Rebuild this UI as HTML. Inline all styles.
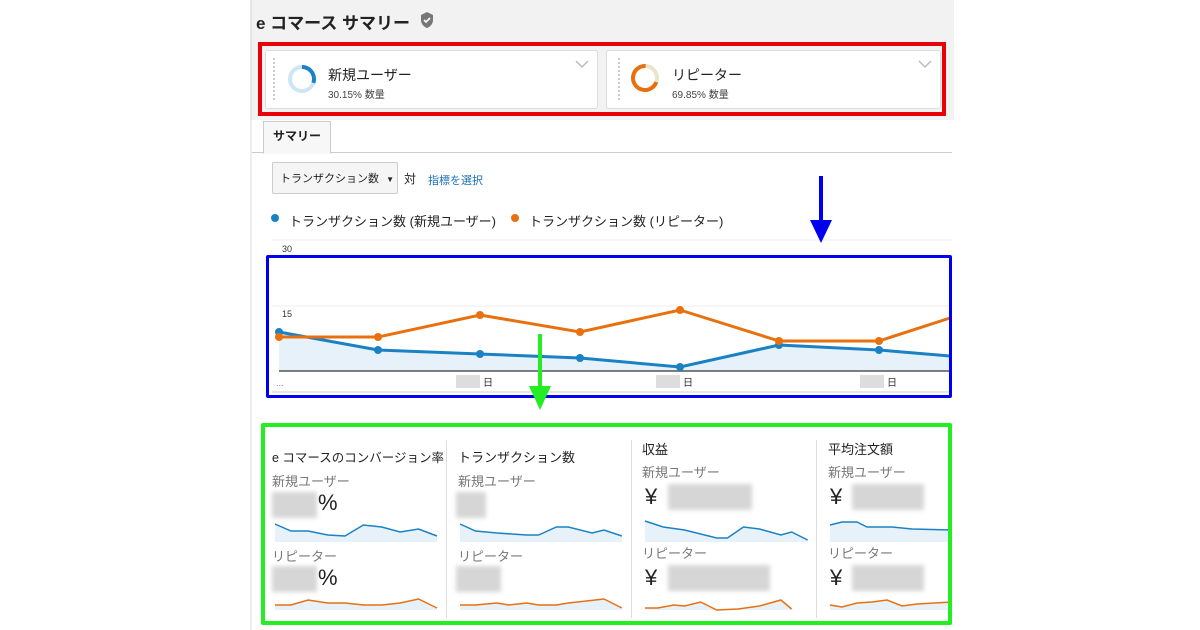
<!DOCTYPE html>
<html><head><meta charset="utf-8"><style>
body{margin:0;width:1200px;height:630px;background:#fff;position:relative;overflow:hidden;font-family:"Liberation Sans","Noto Sans CJK JP",sans-serif;color:#222}
.a{position:absolute}
.card{position:absolute;background:#fff;border:1px solid #ddd;border-radius:3px}
.gr{color:#777}
.blur{position:absolute;background:#d6d6d6;filter:blur(2px)}
</style></head><body>
<div class="a" style="left:250px;top:0;width:702px;height:120px;background:#f2f2f2;border-left:2px solid #e6e6e6"></div>
<div class="a" style="left:250px;top:120px;width:2px;height:510px;background:#eee"></div>
<div class="a" style="left:256px;top:9px;font-size:17px;font-weight:bold">e コマース サマリー</div>
<svg class="a" style="left:420px;top:12px" width="14" height="16" viewBox="0 0 14 16"><path d="M7 0L13 3V8C13 12 10 15 7 16C4 15 1 12 1 8V3Z" fill="#777"/><path d="M4 8l2 2 4-4" stroke="#fff" stroke-width="1.6" fill="none"/></svg>

<div class="card" style="left:265px;top:50px;width:331px;height:57px"></div>
<div class="card" style="left:606px;top:50px;width:333px;height:57px"></div>
<div class="a" style="left:273px;top:58px;width:3px;height:42px;border-left:2px dotted #ccc"></div>
<div class="a" style="left:618px;top:58px;width:3px;height:42px;border-left:2px dotted #ccc"></div>
<svg class="a" style="left:286px;top:63px" width="32" height="32"><circle cx="16" cy="16" r="12" fill="none" stroke="#cde6f5" stroke-width="4"/><circle cx="16" cy="16" r="12" fill="none" stroke="#1a82c4" stroke-width="4" stroke-dasharray="22.7 80" transform="rotate(-90 16 16)"/></svg>
<svg class="a" style="left:628px;top:61px" width="34" height="34"><circle cx="17" cy="17" r="12" fill="none" stroke="#e8e5c8" stroke-width="4"/><circle cx="17" cy="17" r="12" fill="none" stroke="#e8700f" stroke-width="4" stroke-dasharray="52.6 80" transform="rotate(20 17 17)"/></svg>
<div class="a" style="left:328px;top:65px;font-size:14px">新規ユーザー</div>
<div class="a" style="left:328px;top:86px;font-size:10px;color:#444">30.15% 数量</div>
<div class="a" style="left:672px;top:65px;font-size:14px">リピーター</div>
<div class="a" style="left:672px;top:86px;font-size:10px;color:#444">69.85% 数量</div>
<svg class="a" style="left:575px;top:60px" width="14" height="9"><path d="M1 1l6 6 6-6" stroke="#bbb" stroke-width="1.5" fill="none"/></svg>
<svg class="a" style="left:918px;top:60px" width="14" height="9"><path d="M1 1l6 6 6-6" stroke="#bbb" stroke-width="1.5" fill="none"/></svg>
<div class="a" style="left:258px;top:42px;width:680px;height:66px;border:4px solid #e8000b"></div>

<div class="a" style="left:252px;top:152px;width:700px;height:1px;background:#ccc"></div>
<div class="a" style="left:263px;top:121px;width:66px;height:31px;background:#f7f7f7;border:1px solid #ccc;border-bottom:1px solid #f7f7f7;font-size:12px;font-weight:bold;line-height:28px;text-align:center">サマリー</div>
<div class="a" style="left:272px;top:162px;width:126px;height:32px;border:1px solid #ccc;border-radius:2px;background:#f5f5f5;font-size:11px;line-height:32px;padding-left:7px;box-sizing:border-box">トランザクション数 <span style="font-size:8px;margin-left:4px">▼</span></div>
<div class="a" style="left:404px;top:170px;font-size:12px">対</div>
<div class="a" style="left:428px;top:172px;font-size:11px;color:#1a6fb5">指標を選択</div>
<div class="a" style="left:271px;top:214px;width:8px;height:8px;border-radius:50%;background:#1a82c4"></div>
<div class="a" style="left:289px;top:211px;font-size:13px">トランザクション数 (新規ユーザー)</div>
<div class="a" style="left:511px;top:214px;width:8px;height:8px;border-radius:50%;background:#e8700f"></div>
<div class="a" style="left:529px;top:211px;font-size:13px">トランザクション数 (リピーター)</div>

<svg class="a" style="left:252px;top:170px" width="700" height="250">
<line x1="20" y1="70" x2="700" y2="70" stroke="#eee"/>
<text x="30" y="82" font-size="9" fill="#333" font-family="Liberation Sans">30</text>
<line x1="20" y1="136" x2="700" y2="136" stroke="#eee"/>
<text x="30" y="147" font-size="9" fill="#333" font-family="Liberation Sans">15</text>
<path d="M27 162L126 180L228 184L328 188L428 197L527 175L627 180L698 186V201H27Z" fill="#e6f1fa"/>
<line x1="27" y1="201" x2="700" y2="201" stroke="#555" stroke-width="1.5"/>
<polyline points="27,162 126,180 228,184 328,188 428,197 527,175 627,180 698,186" fill="none" stroke="#1a82c4" stroke-width="3"/>
<polyline points="27,167 126,167 228,145 328,162 428,140 527,171 627,171 698,148" fill="none" stroke="#e8700f" stroke-width="3"/>
<g fill="#1a82c4"><circle cx="27" cy="162" r="4"/><circle cx="126" cy="180" r="4"/><circle cx="228" cy="184" r="4"/><circle cx="328" cy="188" r="4"/><circle cx="428" cy="197" r="4"/><circle cx="527" cy="175" r="4"/><circle cx="627" cy="180" r="4"/></g>
<g fill="#e8700f"><circle cx="27" cy="167" r="4"/><circle cx="126" cy="167" r="4"/><circle cx="228" cy="145" r="4"/><circle cx="328" cy="162" r="4"/><circle cx="428" cy="140" r="4"/><circle cx="527" cy="171" r="4"/><circle cx="627" cy="171" r="4"/></g>
<rect x="204" y="205" width="24" height="13" fill="#ddd"/><text x="231" y="216" font-size="10" fill="#333">日</text>
<rect x="404" y="205" width="24" height="13" fill="#ddd"/><text x="431" y="216" font-size="10" fill="#333">日</text>
<rect x="608" y="205" width="24" height="13" fill="#ddd"/><text x="635" y="216" font-size="10" fill="#333">日</text>
<text x="24" y="216" font-size="9" fill="#777">...</text>
<line x1="20" y1="222" x2="700" y2="222" stroke="#ccc"/>
</svg>
<div class="a" style="left:266px;top:255px;width:680px;height:137px;border:3px solid #0000ee;border-radius:2px"></div>
<div class="a" style="left:819px;top:176px;width:4px;height:46px;background:#0000ee"></div>
<div class="a" style="left:810px;top:220px;width:0;height:0;border-left:11px solid transparent;border-right:11px solid transparent;border-top:23px solid #0000ee"></div>
<div class="a" style="left:538px;top:334px;width:4px;height:54px;background:#22ee22"></div>
<div class="a" style="left:529px;top:386px;width:0;height:0;border-left:11px solid transparent;border-right:11px solid transparent;border-top:24px solid #22ee22"></div>

<div class="a" style="left:446px;top:440px;width:1px;height:178px;background:#ddd"></div>
<div class="a" style="left:631px;top:440px;width:1px;height:178px;background:#ddd"></div>
<div class="a" style="left:816px;top:440px;width:1px;height:178px;background:#ddd"></div>
<div class="a" style="left:272px;top:447px;font-size:12.5px;white-space:nowrap">e コマースのコンバージョン率</div>
<div class="a" style="left:458px;top:447px;font-size:13px">トランザクション数</div>
<div class="a" style="left:642px;top:439px;font-size:13px">収益</div>
<div class="a" style="left:828px;top:439px;font-size:13px">平均注文額</div>
<div class="a gr" style="left:272px;top:471px;font-size:13px">新規ユーザー</div>
<div class="a gr" style="left:458px;top:471px;font-size:13px">新規ユーザー</div>
<div class="a gr" style="left:642px;top:462px;font-size:13px">新規ユーザー</div>
<div class="a gr" style="left:828px;top:462px;font-size:13px">新規ユーザー</div>
<div class="a gr" style="left:272px;top:546px;font-size:13px">リピーター</div>
<div class="a gr" style="left:458px;top:546px;font-size:13px">リピーター</div>
<div class="a gr" style="left:642px;top:543px;font-size:13px">リピーター</div>
<div class="a gr" style="left:828px;top:543px;font-size:13px">リピーター</div>
<div class="blur" style="left:272px;top:492px;width:45px;height:26px"></div><div class="a" style="left:318px;top:490px;font-size:22px">%</div>
<div class="blur" style="left:272px;top:566px;width:45px;height:26px"></div><div class="a" style="left:318px;top:565px;font-size:22px">%</div>
<div class="blur" style="left:456px;top:492px;width:30px;height:26px"></div>
<div class="blur" style="left:456px;top:566px;width:45px;height:26px"></div>
<div class="a" style="left:645px;top:484px;font-size:22px">¥</div><div class="blur" style="left:668px;top:484px;width:84px;height:26px"></div>
<div class="a" style="left:645px;top:565px;font-size:22px">¥</div><div class="blur" style="left:668px;top:565px;width:102px;height:26px"></div>
<div class="a" style="left:830px;top:484px;font-size:22px">¥</div><div class="blur" style="left:852px;top:484px;width:72px;height:26px"></div>
<div class="a" style="left:830px;top:565px;font-size:22px">¥</div><div class="blur" style="left:852px;top:565px;width:72px;height:26px"></div>
<svg class="a" style="left:252px;top:490px" width="700" height="130">
<g transform="translate(23,0) scale(1.227,1)">
<path d="M0 34L13 41L27 41L43 45L57 46L72 35L87 37L102 42L117 39L132 46V52H0Z" fill="#e6f1fa"/>
<path d="M0 115L13 115L27 110L43 113L57 113L72 115L87 115L102 113L117 109L132 118V120H0Z" fill="#e6f1fa"/>
<polyline vector-effect="non-scaling-stroke" fill="none" stroke-width="1.5" stroke="#1a82c4" points="0,34 13,41 27,41 43,45 57,46 72,35 87,37 102,42 117,39 132,46"/>
<polyline vector-effect="non-scaling-stroke" fill="none" stroke-width="1.5" stroke="#e8700f" points="0,115 13,115 27,110 43,113 57,113 72,115 87,115 102,113 117,109 132,118"/>
</g>
<g transform="translate(208,0) scale(1.19,1)">
<path d="M0 34L13 41L31 43L56 45L66 45L81 37L91 37L111 43L121 40L136 46V52H0Z" fill="#e6f1fa"/>
<path d="M0 115L13 115L31 113L41 115L56 113L66 115L81 115L91 113L121 109L136 118V120H0Z" fill="#e6f1fa"/>
<polyline vector-effect="non-scaling-stroke" fill="none" stroke-width="1.5" stroke="#1a82c4" points="0,34 13,41 31,43 56,45 66,45 81,37 91,37 111,43 121,40 136,46"/>
<polyline vector-effect="non-scaling-stroke" fill="none" stroke-width="1.5" stroke="#e8700f" points="0,115 13,115 31,113 41,115 56,113 66,115 81,115 91,113 121,109 136,118"/>
</g>
<g transform="translate(393,0) scale(1.07,1)">
<path d="M0 31L17 37L37 40L67 48L77 48L92 37L107 39L127 45L137 42L152 50V52H0Z" fill="#e6f1fa"/>
<path d="M0 118L12 118L27 115L37 116L52 112L67 120L87 119L107 116L127 110L137 119V120H0Z" fill="#e6f1fa"/>
<polyline vector-effect="non-scaling-stroke" fill="none" stroke-width="1.5" stroke="#1a82c4" points="0,31 17,37 37,40 67,48 77,48 92,37 107,39 127,45 137,42 152,50"/>
<polyline vector-effect="non-scaling-stroke" fill="none" stroke-width="1.5" stroke="#e8700f" points="0,118 12,118 27,115 37,116 52,112 67,120 87,119 107,116 127,110 137,119"/>
</g>
<path d="M578 35L590 32L605 32L615 37L640 37L660 39L700 40V52H578Z" fill="#e6f1fa"/>
<path d="M578 115L590 117L605 113L620 112L635 110L650 116L665 114L700 112V120H578Z" fill="#e6f1fa"/>
<polyline fill="none" stroke-width="1.5" stroke="#1a82c4" points="578,35 590,32 605,32 615,37 640,37 660,39 700,40"/>
<polyline fill="none" stroke-width="1.5" stroke="#e8700f" points="578,115 590,117 605,113 620,112 635,110 650,116 665,114 700,112"/>
</svg>
<div class="a" style="left:261px;top:423px;width:683px;height:194px;border:4px solid #22ee22;border-radius:2px"></div>
</body></html>
